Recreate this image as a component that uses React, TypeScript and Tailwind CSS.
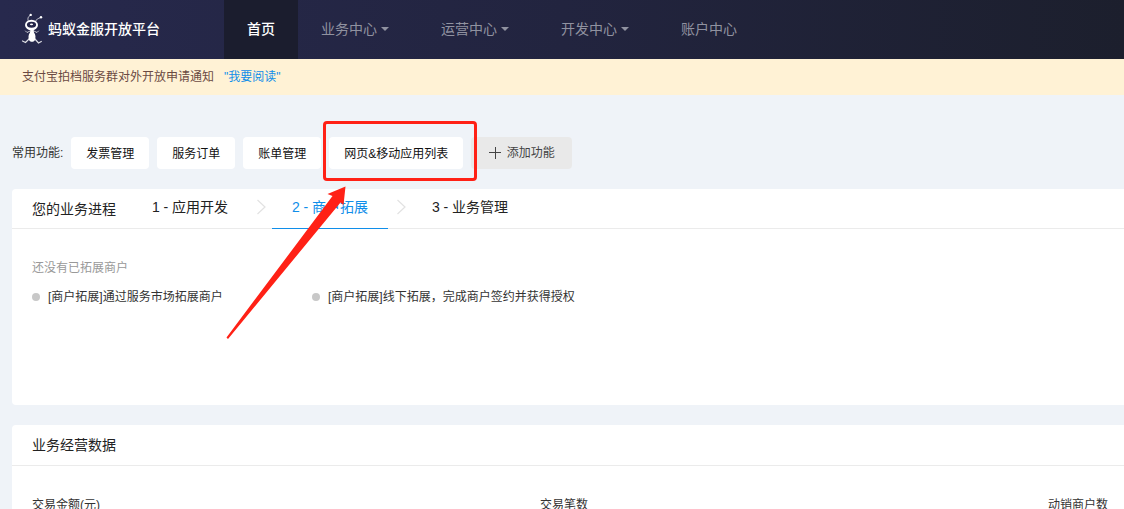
const navItems = [
  { label: "业务中心", menu: true },
  { label: "运营中心", menu: true },
  { label: "开发中心", menu: true },
  { label: "账户中心", menu: false },
];

const shortcuts = ["发票管理", "服务订单", "账单管理"];

const steps = [
  { label: "1 - 应用开发", active: false },
  { label: "2 - 商户拓展", active: true },
  { label: "3 - 业务管理", active: false },
];

const tasks = [
  "[商户拓展]通过服务市场拓展商户",
  "[商户拓展]线下拓展，完成商户签约并获得授权",
];

const stats = ["交易金额(元)", "交易笔数", "动销商户数"];

function AntLogo() {
  return (
    <svg width="22" height="32" viewBox="0 0 22 32" fill="none" stroke="#fff" strokeLinecap="round">
      <path d="M7.5 8.5C6.2 6 7 3.5 9 2.5M14 8.5C15.5 6.500 17 5.500 19 4.800" strokeWidth="0.9" opacity="0.8" />
      <circle cx="9.700" cy="1.900" r="1.200" fill="#fff" stroke="none" />
      <circle cx="20" cy="4.300" r="1.200" fill="#fff" stroke="none" />
      <ellipse cx="10.500" cy="12" rx="6.500" ry="5.200" fill="#fff" stroke="none" />
      <ellipse cx="10.500" cy="11.800" rx="4.600" ry="3" fill="#25264a" stroke="none" />
      <ellipse cx="10.500" cy="11.300" rx="1.600" ry="0.900" fill="#fff" stroke="none" />
      <path d="M4.500 18L6 19.500L9.500 17.800H12.500L16 19.500L17.500 18" strokeWidth="1" opacity="0.7" />
      <path d="M9.500 16.500H12.500L13 19.500C14.700 21.500 15 25 13.700 27.500C12.500 29.200 9.500 29.200 8.300 27.500C7 25 7.300 21.500 9 19.500Z" fill="#fff" stroke="none" />
      <path d="M8.500 25.500L4.500 29.500L1.500 28M13.500 25.500L17.500 30L20.300 28.500" strokeWidth="1.200" opacity="0.85" />
    </svg>
  );
}

function Header() {
  return (
    <header className="flex h-[59px] items-stretch bg-gradient-to-r from-[#27294d] via-[#22243f] to-[#1c1f2d] text-sm">
      <a href="#" className="flex w-56 shrink-0 items-center gap-[5px] pb-px pl-[21px] font-medium text-white">
        <AntLogo />
        蚂蚁金服开放平台
      </a>
      <nav className="flex">
        <a href="#" className="flex w-[74px] items-center justify-center bg-[#1b1d2e] pb-[2px] font-medium text-white">
          首页
        </a>
        {navItems.map((item) => (
          <button key={item.label} className="flex w-[120px] items-center gap-1 pb-[2px] pl-[23px] text-[#9092a0]">
            {item.label}
            {item.menu && (
              <svg width="8" height="4" viewBox="0 0 8 4" fill="currentColor">
                <path d="M0 0H8L4 4Z" />
              </svg>
            )}
          </button>
        ))}
      </nav>
    </header>
  );
}

function Notice() {
  return (
    <div className="flex h-9 items-center gap-[10px] bg-[#fff2d5] px-[22px] text-[#6b4a43]">
      <span>支付宝拍档服务群对外开放申请通知</span>
      <a href="#" className="text-[#108ee9]">"我要阅读"</a>
    </div>
  );
}

function Shortcuts() {
  return (
    <div className="flex items-center gap-2">
      <span>常用功能:</span>
      {shortcuts.map((s) => (
        <button key={s} className="h-8 w-[78px] rounded bg-white pt-[2px] text-[#111]">
          {s}
        </button>
      ))}
      <div className="relative">
        <button className="h-8 w-[134px] rounded bg-white pt-[2px] text-[#111]">网页&amp;移动应用列表</button>
        <span className="pointer-events-none absolute -top-4 -right-[14px] -bottom-3 -left-[6px] z-10 rounded border-3 border-[#ff2116]" />
      </div>
      <button className="flex h-8 w-[101px] items-center justify-center gap-[6px] rounded bg-[#e9e9e9] text-[#444]">
        <svg width="12" height="12" viewBox="0 0 12 12" stroke="currentColor">
          <path d="M6.500 0V12M0 5.500H12" />
        </svg>
        添加功能
      </button>
    </div>
  );
}

function StepArrow() {
  return (
    <svg width="9" height="16" viewBox="0 0 9 16" fill="none" stroke="#e2e2e2" strokeWidth="1.2">
      <path d="M0.500 1L8 8L0.500 15" />
    </svg>
  );
}

function Progress() {
  return (
    <section className="min-h-[216px] rounded-l bg-white">
      <div className="flex h-10 border-b border-[#ebebeb] pl-5 text-sm text-[#222]">
        <h2 className="flex w-[100px] items-center">您的业务进程</h2>
        {steps.map((step, i) => (
          <div key={step.label} className="flex items-center">
            {i > 0 && (
              <span className="flex w-6 justify-end pr-[6px] pb-[3px]">
                <StepArrow />
              </span>
            )}
            <button
              className={
                step.active
                  ? "-mb-px h-10 w-[116px] border-b border-[#108ee9] pb-[3px] text-[#108ee9]"
                  : "h-10 w-[116px] pb-[3px]"
              }
            >
              {step.label}
            </button>
          </div>
        ))}
      </div>
      <div className="px-5 pt-[29px]">
        <p className="text-[#999]">还没有已拓展商户</p>
        <ul className="mt-[9px] flex">
          {tasks.map((t) => (
            <li key={t} className="flex min-w-[280px] items-center gap-2">
              <span className="size-2 rounded-full bg-[#c8c8c8]" />
              {t}
            </li>
          ))}
        </ul>
      </div>
    </section>
  );
}

function BusinessData() {
  return (
    <section className="rounded-l bg-white">
      <h2 className="flex h-[41px] items-center border-b border-[#ebebeb] pl-5 text-sm text-[#222]">业务经营数据</h2>
      <div className="grid grid-cols-[1fr_1fr_auto] pt-[29px] pr-4 pb-8 pl-5">
        {stats.map((s) => (
          <div key={s}>{s}</div>
        ))}
      </div>
    </section>
  );
}

export default function App() {
  return (
    <div className="relative h-screen overflow-hidden bg-[#eff3f8] font-['Liberation_Sans','Noto_Sans_CJK_SC',sans-serif] text-xs leading-5 text-[#333]">
      <Header />
      <Notice />
      <main className="flex flex-col gap-5 pt-[42px] pl-3">
        <Shortcuts />
        <Progress />
        <BusinessData />
      </main>

      {/* pointer to the app list shortcut */}
      <svg className="pointer-events-none absolute top-[185px] left-[225px]" width="125" height="156" viewBox="0 0 125 156" fill="#ff2116">
        <path d="M120.500 1.500L102.500 9L107.500 11L1.500 152.500L3 154L115.500 17.500L118.500 20Z" />
      </svg>
    </div>
  );
}
